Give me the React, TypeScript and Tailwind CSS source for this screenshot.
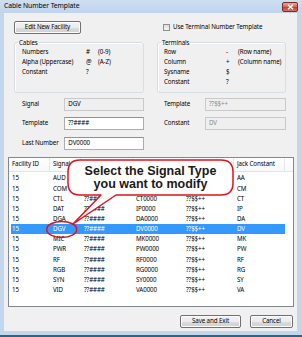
import React from "react";

const rows: [string, string, string, string, string, string][] = [
  ["15", "AUD", "??####", "AA0000", "??$$++", "AA"],
  ["15", "COM", "??####", "CM0000", "??$$++", "CM"],
  ["15", "CTL", "??####", "CT0000", "??$$++", "CT"],
  ["15", "DAT", "??####", "IP0000", "??$$++", "IP"],
  ["15", "DGA", "??####", "DA0000", "??$$++", "DA"],
  ["15", "DGV", "??####", "DV0000", "??$$++", "DV"],
  ["15", "MIC", "??####", "MK0000", "??$$++", "MK"],
  ["15", "PWR", "??####", "PW0000", "??$$++", "PW"],
  ["15", "RF", "??####", "RF0000", "??$$++", "RF"],
  ["15", "RGB", "??####", "RG0000", "??$$++", "RG"],
  ["15", "SYN", "??####", "SY0000", "??$$++", "SY"],
  ["15", "VID", "??####", "VA0000", "??$$++", "VA"],
];

const headers = ["Facility ID", "Signal", "Template", "Last Number", "Template", "Jack Constant"];
const headW = ["w-[41px]", "w-[31px]", "w-[52px]", "w-[50px]", "w-[51px]", "w-[51px]"];
const rowW = ["w-[39px] pl-[1px]", "w-[31px] pl-[3px]", "w-[52px] pl-[3px]", "w-[50px] pl-[3px]", "w-[51px] pl-[3px]", "w-[51px] pl-[3px]"];

const btn =
  "h-[13px] flex items-center justify-center rounded-[2px] border border-[#707070] bg-[linear-gradient(#f2f2f2_0%,#ebebeb_50%,#dddddd_51%,#cfcfcf_100%)] shadow-[inset_0_0_0_1px_#fcfcfc]";

function Field({ label, value, enabled, labelW, gray }: { label: string; value: string; enabled?: boolean; labelW: string; gray?: boolean }) {
  return (
    <div className="flex items-center">
      <div className={labelW}>{label}</div>
      <div
        className={
          "w-[81px] h-[13px] flex items-center pl-[3px] border " +
          (enabled ? "bg-white border-[#abadb3] border-t-[#8e9297]" : "bg-[#efefef] border-[#c9c9c9]") +
          (gray ? " text-[#8a8a8a]" : "")
        }
      >
        {value}
      </div>
    </div>
  );
}

export default function App() {
  return (
    <div className="w-[302px] h-[337px] relative overflow-hidden bg-[#c2d6ec] flex flex-col text-[6.2px] tracking-[-0.1px] leading-none text-black font-['Noto_Sans',sans-serif]">
      {/* title bar */}
      <div className="h-[13px] flex items-center justify-between pl-[4px] pr-[4px] bg-[linear-gradient(#cddff2,#bfd4ec)]">
        <span className="text-[6.8px]">Cable Number Template</span>
        <div className="w-[16px] h-[10px] rounded-[2px] border border-[#7a2d24] bg-[linear-gradient(#e8a89d_0%,#d36a5b_45%,#c2412f_55%,#d9735e_100%)] flex items-center justify-center">
          <svg width="7" height="6" viewBox="0 0 7 6">
            <path d="M1 0.8 L6 5.2 M6 0.8 L1 5.2" stroke="#ffffff" strokeWidth="1.4" />
          </svg>
        </div>
      </div>

      {/* content */}
      <div className="h-[318px] ml-[4px] mr-[5px] bg-[#f0f0f0] flex flex-col">
        {/* top row */}
        <div className="mt-[8px] ml-[10px] flex gap-[13px] h-[12px]">
          <div className="w-[130px]">
            <div className={btn + " w-[67px] h-[12px]"}>Edit New Facility</div>
          </div>
          <div className="w-[129px] pl-[6px] flex items-center gap-[3px]">
            <div className="w-[7px] h-[7px] border border-[#8f8f8f] bg-[linear-gradient(#dcdcdc,#f6f6f6)]" />
            <span>Use Terminal Number Template</span>
          </div>
        </div>

        {/* group boxes */}
        <div className="mt-[5px] ml-[10px] flex gap-[13px]">
          <fieldset className="w-[130px] h-[55px] border border-[#d5dfe5] rounded-[3px] m-0 p-0 min-w-0 shadow-[inset_1px_1px_0_#ffffff]">
            <legend className="ml-[3px] px-[1px] leading-[9px]">Cables</legend>
            <div className="pt-[0.5px] pl-[7px]">
              {[
                ["Numbers", "#", "(0-9)"],
                ["Alpha (Uppercase)", "@", "(A-Z)"],
                ["Constant", "?", ""],
              ].map(([a, b, c]) => (
                <div key={a} className="h-[10px] flex items-center">
                  <span className="w-[64px]">{a}</span>
                  <span className="w-[12px]">{b}</span>
                  <span>{c}</span>
                </div>
              ))}
            </div>
          </fieldset>
          <fieldset className="w-[129px] h-[55px] border border-[#d5dfe5] rounded-[3px] m-0 p-0 min-w-0 shadow-[inset_1px_1px_0_#ffffff]">
            <legend className="ml-[3px] px-[1px] leading-[9px]">Terminals</legend>
            <div className="pt-[0.5px] pl-[6px]">
              {[
                ["Row", "-", "(Row name)"],
                ["Column", "+", "(Column name)"],
                ["Sysname", "$", ""],
                ["Constant", "?", ""],
              ].map(([a, b, c]) => (
                <div key={a} className="h-[10px] flex items-center">
                  <span className="w-[62px]">{a}</span>
                  <span className="w-[12px]">{b}</span>
                  <span>{c}</span>
                </div>
              ))}
            </div>
          </fieldset>
        </div>

        {/* fields */}
        <div className="mt-[5px] ml-[10px] flex gap-[13px]">
          <div className="w-[130px] flex flex-col">
            <Field label="Signal" value="DGV" labelW="w-[51px] pl-[8px]" />
            <div className="mt-[6px]">
              <Field label="Template" value="??####" enabled labelW="w-[51px] pl-[8px]" />
            </div>
            <div className="mt-[7px]">
              <Field label="Last Number" value="DV0000" enabled labelW="w-[51px] pl-[8px]" />
            </div>
          </div>
          <div className="w-[129px] flex flex-col">
            <Field label="Template" value="??$$++" gray labelW="w-[48px] pl-[7px]" />
            <div className="mt-[6px]">
              <Field label="Constant" value="DV" gray labelW="w-[48px] pl-[7px]" />
            </div>
          </div>
        </div>

        {/* list */}
        <div className="mt-[7px] ml-[4px] w-[286px] h-[150px] border border-[#828790] bg-white flex flex-col">
          <div className="h-[14px] flex bg-[linear-gradient(#ffffff,#f7f8fa)] border-b border-[#e5e5e5]">
            {headers.map((h, i) => (
              <div key={i} className={headW[i] + " pl-[3px] flex items-center border-r border-[#e3e8ee] whitespace-nowrap"}>
                {h}
              </div>
            ))}
          </div>
          <div className="pt-[1.5px] pl-[2px]">
            {rows.map((r) => {
              const sel = r[1] === "DGV";
              return (
                <div key={r[1]} className={"h-[10.15px] flex items-center w-[274px] " + (sel ? "bg-[#3399ff] text-white" : "")}>
                  {r.map((c, i) => (
                    <div key={i} className={rowW[i]}>
                      {c}
                    </div>
                  ))}
                </div>
              );
            })}
          </div>
        </div>

        {/* buttons */}
        <div className="mt-[8px] pr-[4px] flex justify-end gap-[9px]">
          <div className={btn + " w-[61px] border-[#3c7fb1] shadow-[inset_0_0_0_1px_#c9ecfc]"}>Save and Exit</div>
          <div className={btn + " w-[43px]"}>Cancel</div>
        </div>
      </div>
      <div className="h-[4px]" />
      <div className="h-[2px] bg-[#2a6584]" />

      {/* callout overlay */}
      <svg className="absolute left-0 top-0 pointer-events-none" width="302" height="337" viewBox="0 0 302 337">
        <path
          d="M80 160 H221 Q233 160 233 172 V183 Q233 195 221 195 H116 L73 224 L101 195 H80 Q68 195 68 183 V172 Q68 160 80 160 Z"
          fill="#ffffff"
          stroke="#e4101a"
          strokeWidth="1.5"
          strokeLinejoin="round"
        />
        <ellipse cx="61.7" cy="229.4" rx="15" ry="8" fill="none" stroke="#e4101a" strokeWidth="1.5" />
      </svg>
      <div className="absolute left-[68px] top-[160px] w-[165px] h-[35px] flex flex-col items-center justify-center font-['Liberation_Sans',Arial,sans-serif] font-bold tracking-normal text-[12.5px] leading-[12.5px] text-[#1a1a1a]">
        <span>Select the Signal Type</span>
        <span>you want to modify</span>
      </div>
    </div>
  );
}
